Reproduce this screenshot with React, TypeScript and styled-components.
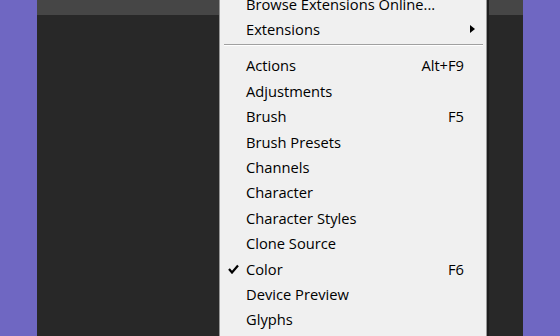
import React from 'react'
import styled, { createGlobalStyle } from 'styled-components'

const GlobalStyle = createGlobalStyle`
  html, body {
    margin: 0;
    padding: 0;
    background: #6f67c2;
    overflow: hidden;
  }
  body {
    font-family: "Open Sans", "Noto Sans", sans-serif;
  }
`

const Screen = styled.div`
  display: flex;
  width: 560px;
  height: 336px;
  background: #6f67c2;
`

const Panel = styled.div`
  position: relative;
  display: flex;
  flex-direction: column;
  flex: 1;
  margin: 0 37px;
  background: #282828;
`

const TopBar = styled.div`
  height: 15px;
  background: #464646;
`

const Menu = styled.div`
  position: absolute;
  top: 0;
  left: 182px;
  width: 266px;
  height: 336px;
  background: #f0f0f0;
  border-left: 1px solid #979797;
  border-right: 1px solid #979797;
  box-shadow: 2px 0 0 #1e1e1e;
  overflow: hidden;
`

const List = styled.div`
  display: flex;
  flex-direction: column;
  margin-top: -9px;
`

const Row = styled.div`
  display: flex;
  align-items: center;
  height: 25.4px;
  padding: 0 22px 0 8px;
  font-size: 14.7px;
  color: #000;
`

const Check = styled.div`
  width: 18px;
  height: 25px;
  display: flex;
  align-items: center;
  justify-content: flex-start;
`

const Label = styled.div`
  flex: 1;
`

const Shortcut = styled.div`
  text-align: right;
`

const Arrow = styled.div`
  width: 0;
  height: 0;
  border-top: 4.5px solid transparent;
  border-bottom: 4.5px solid transparent;
  border-left: 5px solid #000;
  margin-right: -11px;
`

const Separator = styled.div`
  height: 1px;
  margin: 2px 3px 7px 4px;
  background: #a0a0a0;
  border-bottom: 1px solid #ffffff;
`

type Item = { label: string; shortcut?: string; checked?: boolean }

const items: Item[] = [
  { label: 'Actions', shortcut: 'Alt+F9' },
  { label: 'Adjustments' },
  { label: 'Brush', shortcut: 'F5' },
  { label: 'Brush Presets' },
  { label: 'Channels' },
  { label: 'Character' },
  { label: 'Character Styles' },
  { label: 'Clone Source' },
  { label: 'Color', shortcut: 'F6', checked: true },
  { label: 'Device Preview' },
  { label: 'Glyphs' },
]

const CheckMark = () => (
  <svg width="11" height="10" viewBox="0 0 11 10">
    <path d="M1 5 L4 8.5 L10 1.5" fill="none" stroke="#000" strokeWidth="2.2" />
  </svg>
)

const MenuRow = ({ item }: { item: Item }) => (
  <Row>
    <Check>{item.checked && <CheckMark />}</Check>
    <Label>{item.label}</Label>
    {item.shortcut && <Shortcut>{item.shortcut}</Shortcut>}
  </Row>
)

const App = () => {
  return (
    <Screen>
      <GlobalStyle />
      <Panel>
        <TopBar />
        <Menu>
          <List>
            <MenuRow item={{ label: 'Browse Extensions Online...' }} />
            <Row>
              <Check />
              <Label>Extensions</Label>
              <Arrow />
            </Row>
            <Separator />
            {items.map((item) => (
              <MenuRow key={item.label} item={item} />
            ))}
          </List>
        </Menu>
      </Panel>
    </Screen>
  )
}

export default App
